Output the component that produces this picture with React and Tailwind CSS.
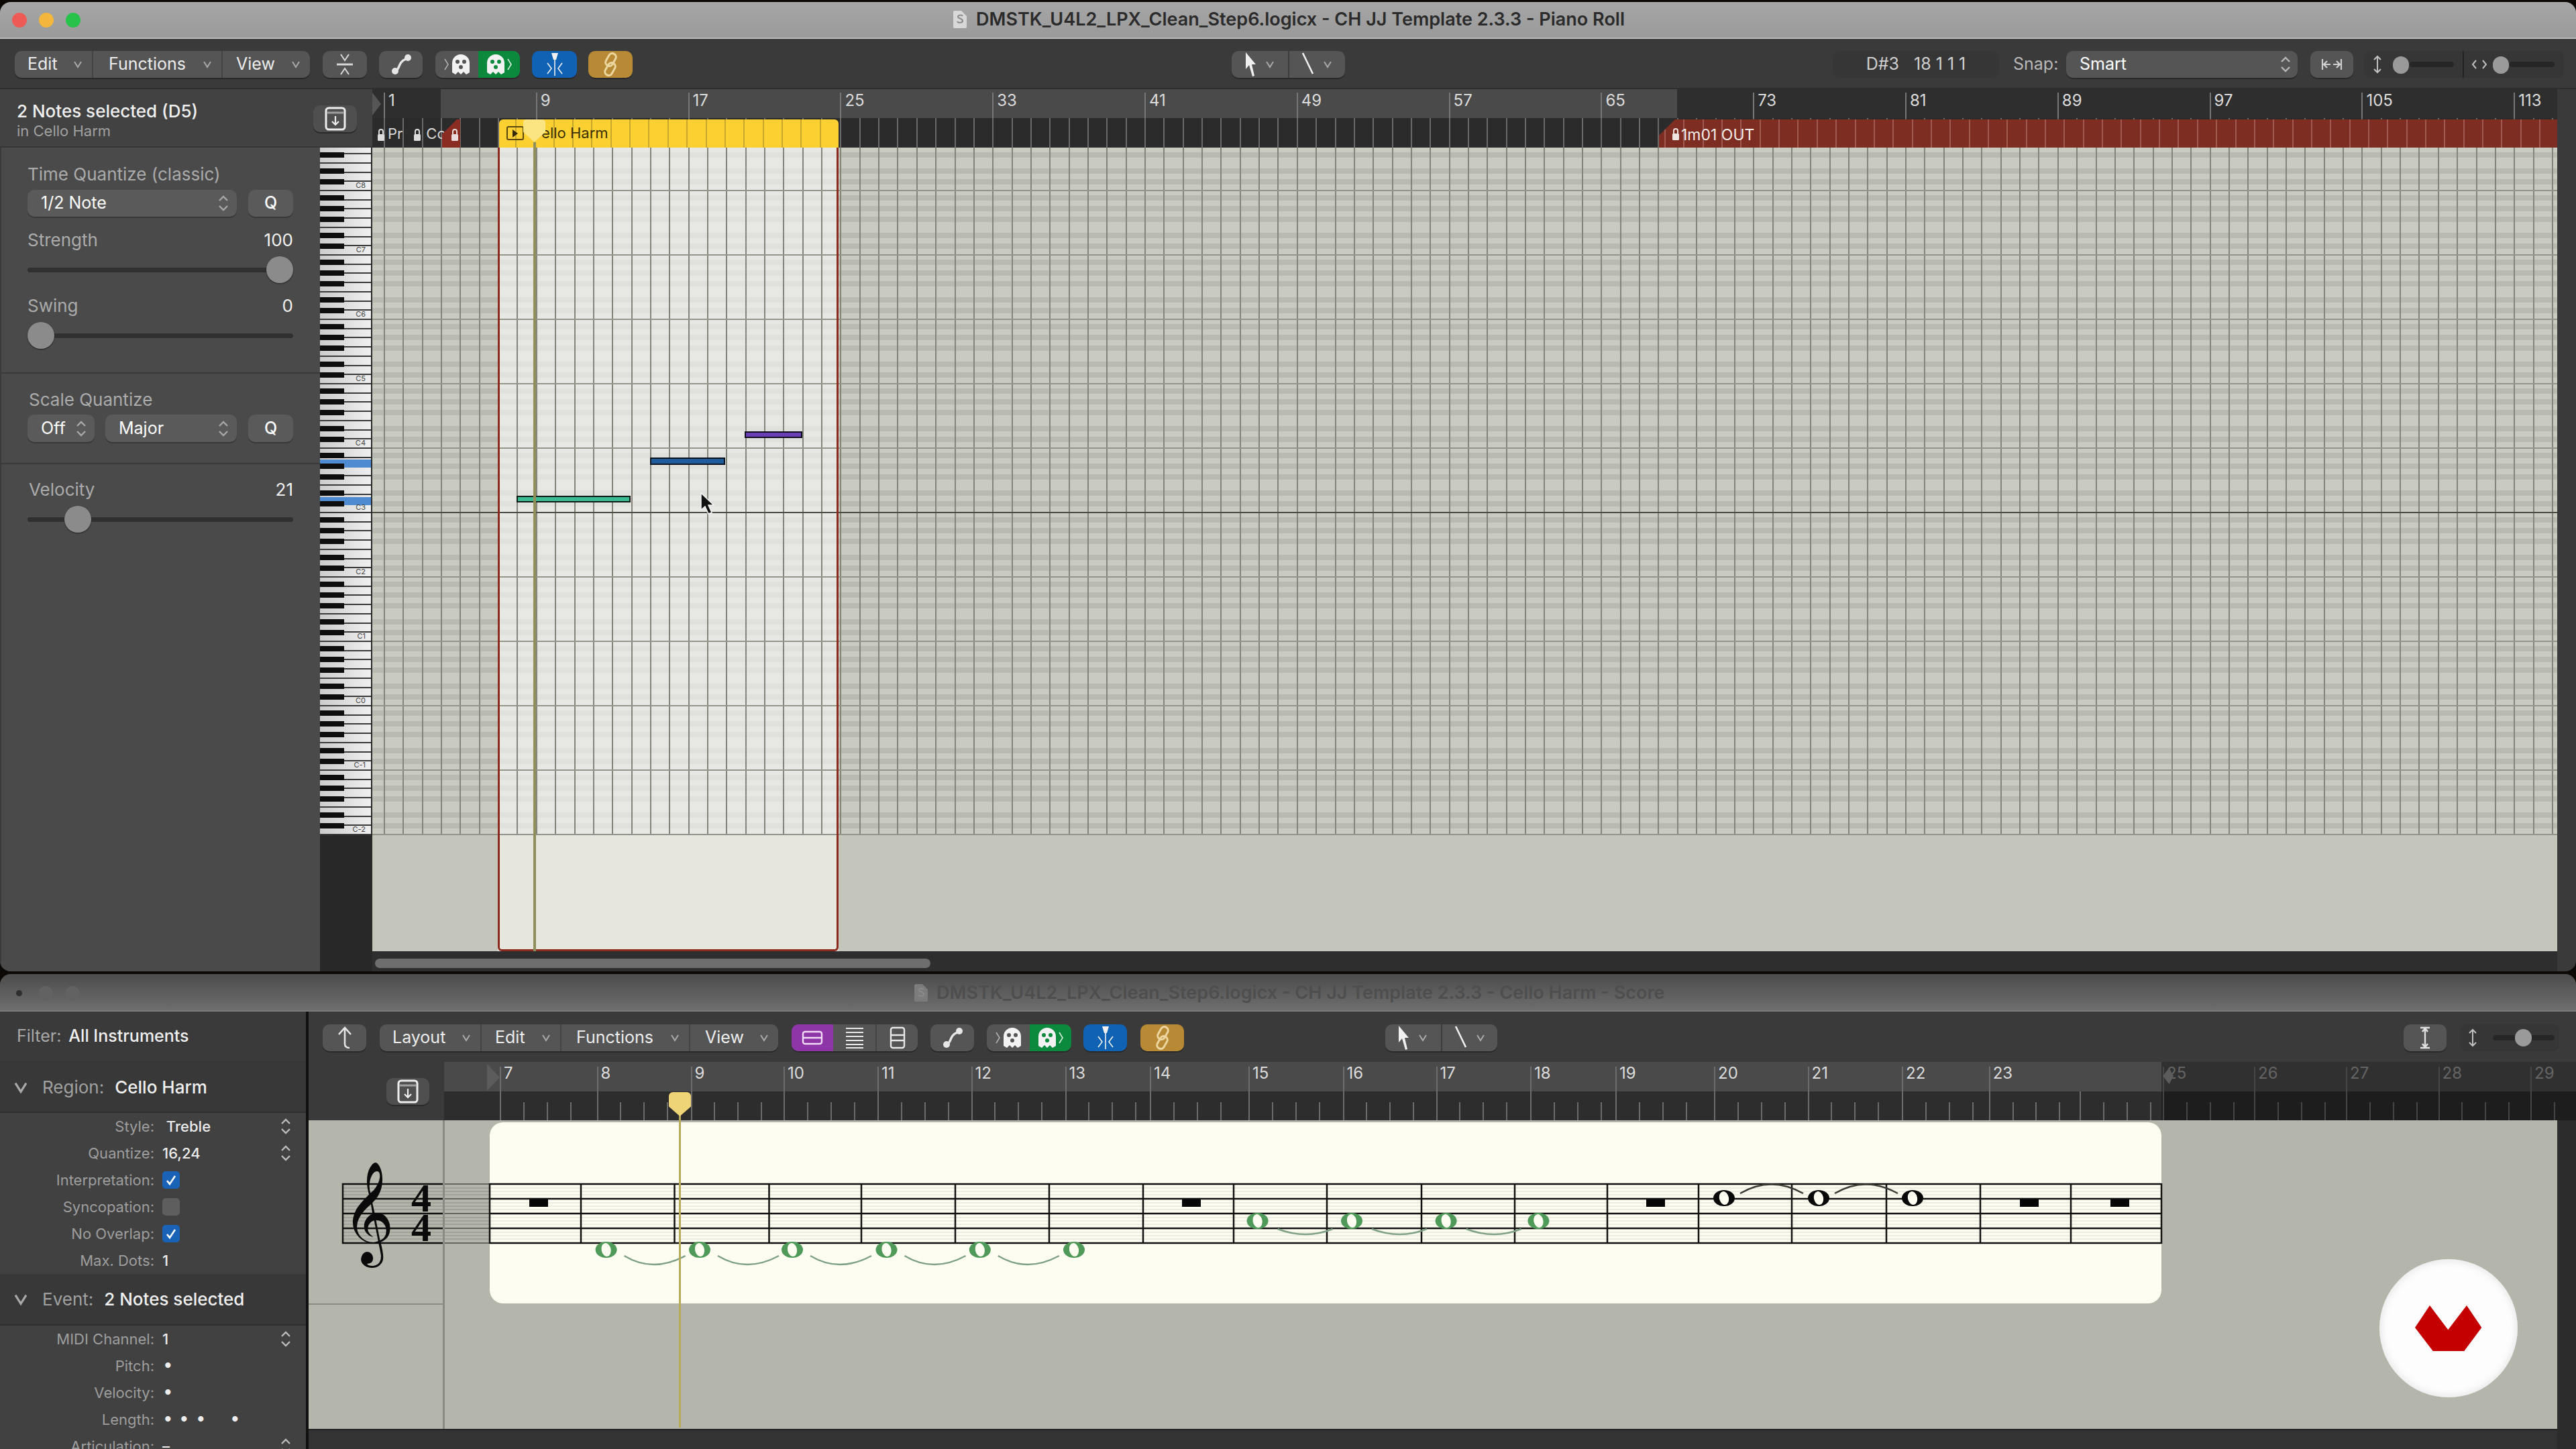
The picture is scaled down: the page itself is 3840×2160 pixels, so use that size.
import React from 'react';

// shared button looks
const btnBase = 'flex items-center justify-center h-[40px] rounded-[10px] shadow-[0_2px_0_#2a2a2a]';
const btn = `${btnBase} bg-[#555555]`;
const BAR = 28.35;
const range = (n) => Array.from({ length: n }, (_, i) => i);

const Chev = ({ className = '' }) => (
  <svg className={className} width="14" height="12" viewBox="0 0 14 12" fill="none" stroke="#a8a8a8" strokeWidth="2"><path d="M2 2l5 8 5-8" /></svg>
);

const Updown = ({ color = '#b8b8b8', className = '' }) => (
  <svg className={className} width="16" height="26" viewBox="0 0 16 26" fill="none" stroke={color} strokeWidth="2.4"><path d="M2 9l6-6 6 6M2 17l6 6 6-6" /></svg>
);

const Lock = ({ className = '', color = '#dddddd' }) => (
  <svg className={className} width="12" height="20" viewBox="0 0 12 20" fill="none"><path d="M3 9V5a3 3 0 0 1 6 0v4" stroke={color} strokeWidth="2" /><rect x="1" y="9" width="10" height="10" rx="1.5" fill={color} /></svg>
);

const Collapse = () => (
  <svg width="26" height="32" viewBox="0 0 26 32" fill="none" stroke="#d8d8d8" strokeWidth="2"><path d="M7 1l6 9 6-9M7 31l6-9 6 9" /><path d="M1 16h24" strokeWidth="3" /></svg>
);

const Wire = () => (
  <svg width="34" height="34" viewBox="0 0 34 34" fill="none"><path d="M8 27c6-2 5-8 9-13s6-4 9-6" stroke="#e6e6e6" strokeWidth="3.5" /><circle cx="8" cy="27" r="5" fill="#e6e6e6" /><circle cx="27" cy="7" r="5" fill="#e6e6e6" /></svg>
);

const Ghost = ({ hole }) => (
  <svg width="28" height="32" viewBox="0 0 28 32"><path d="M1 28V14a13 13 0 0 1 26 0v14l-5 3-4-4-4 4-4-4-4 4z" fill="#f2f2f2" /><circle cx="9" cy="12" r="3" fill={hole} /><circle cx="19" cy="12" r="3" fill={hole} /><circle cx="14" cy="20" r="3" fill={hole} /></svg>
);

const Catch = () => (
  <div className="flex h-[40px] w-[126px] rounded-[10px] bg-[#555555] shadow-[0_2px_0_#2a2a2a] overflow-hidden">
    <div className="flex w-[64px] items-center justify-center gap-[3px]">
      <svg width="8" height="20" viewBox="0 0 8 20" fill="none" stroke="#b0b0b0" strokeWidth="1.6"><path d="M1 2l5 8-5 8" /></svg>
      <Ghost hole="#555555" />
    </div>
    <div className="flex flex-1 items-center justify-center gap-[3px] bg-[#0b8a3e]">
      <Ghost hole="#0b8a3e" />
      <svg width="8" height="20" viewBox="0 0 8 20" fill="none" stroke="#d5efdd" strokeWidth="1.6"><path d="M1 2l5 8-5 8" /></svg>
    </div>
  </div>
);

const Flex = () => (
  <svg width="30" height="36" viewBox="0 0 30 36" fill="none" stroke="#f0f0f0" strokeWidth="1.6">
    <path d="M10 1h10l-3 10h-4z" fill="#f0f0f0" stroke="none" />
    <path d="M15 10v25" />
    <path d="M4 16l6 8-6 8M26 16l-6 8 6 8" />
  </svg>
);

const LinkIcon = () => (
  <svg width="30" height="36" viewBox="0 0 30 36" fill="none" stroke="#ecd6a0" strokeWidth="3">
    <rect x="10" y="1" width="11" height="20" rx="5.5" transform="rotate(30 15.5 11)" />
    <rect x="9" y="15" width="11" height="20" rx="5.5" transform="rotate(30 14.5 25)" />
  </svg>
);

const Arrow = () => (
  <svg width="18" height="38" viewBox="0 0 18 38"><path d="M1 1l15 18h-6l4 17-3 1-5-17-5 6z" fill="#f0f0f0" /></svg>
);

const Pencil = () => (
  <svg width="20" height="38" viewBox="0 0 20 38" fill="none" stroke="#f0f0f0" strokeWidth="2.6"><path d="M2 2l15 31" /></svg>
);

const Tools = ({ className }) => (
  <div className={`flex h-[40px] rounded-[10px] bg-[#555555] shadow-[0_2px_0_#2a2a2a] ${className}`}>
    <div className="flex flex-1 items-center justify-center gap-[12px] border-r-2 border-[#3d3d3d]"><Arrow /><Chev /></div>
    <div className="flex flex-1 items-center justify-center gap-[12px]"><Pencil /><Chev /></div>
  </div>
);

const Inbox = () => (
  <svg width="32" height="36" viewBox="0 0 32 36" fill="none" stroke="#eeeeee"><rect x="2" y="2" width="28" height="32" rx="4" strokeWidth="3" /><path d="M3 9h26" strokeWidth="3" stroke="#a0a0a0" /><path d="M16 14v13M11 22l5 5 5-5" strokeWidth="2.2" /></svg>
);

const DocIcon = ({ className, color }) => (
  <svg className={className} width="22" height="28" viewBox="0 0 22 28"><path d="M1 3a2 2 0 0 1 2-2h10l8 8v16a2 2 0 0 1-2 2H3a2 2 0 0 1-2-2z" fill={color} /><path d="M15 9c-1-2-7-2-7 1s7 2 7 6-7 3-8 1" fill="none" stroke="#8a8a8a" strokeWidth="2" /></svg>
);

const Seg = ({ label, w, pl }) => (
  <div className="flex h-full items-center justify-between border-r-2 border-[#444444] last:border-r-0 pr-[14px] text-[25px] text-[#ececec]" style={{ width: w, paddingLeft: pl }}>
    <span>{label}</span><Chev />
  </div>
);

const Slider = ({ knob }) => (
  <div className="relative h-[40px]">
    <div className="absolute left-0 right-0 top-[17px] h-[7px] rounded-full bg-[#303030]" />
    <div className="absolute top-0 h-[40px] w-[40px] rounded-full bg-[#8b8b8b] shadow-[0_1px_2px_#222222]" style={{ left: knob }} />
  </div>
);

const Select = ({ label, className }) => (
  <div className={`flex items-center justify-between rounded-[10px] bg-[#5a5a5a] shadow-[0_2px_0_#383838] pl-[20px] pr-[12px] text-[25px] text-white ${className}`}>
    <span>{label}</span><Updown color="#a8a8a8" />
  </div>
);

const QBtn = () => (
  <div className="flex w-[67px] items-center justify-center rounded-[10px] bg-[#5a5a5a] shadow-[0_2px_0_#383838] text-[25px] font-medium text-white">Q</div>
);

// keyboard on the left of the piano roll, one octave is 96px
function Piano() {
  const blacks = [1, 3, 6, 8, 10];
  return (
    <div className="relative h-[1025px] w-[76px] overflow-hidden bg-gradient-to-r from-[#cccccc] to-[#f0f0f0]">
      {range(11).map((o) =>
        range(7).map((j) => (
          <div key={`w${o}${j}`} className="absolute left-0 right-0 h-[2px] bg-[#3a3a3a]" style={{ top: 1023 - o * 96 - (j * 96) / 7 }} />
        ))
      )}
      <div className="absolute left-0 right-0 top-[465px] h-[12px] bg-[#4f8bd0]" />
      <div className="absolute left-0 right-0 top-[521px] h-[12px] bg-[#4f8bd0]" />
      {range(128).filter((i) => blacks.includes(i % 12)).map((i) => (
        <div key={i} className="absolute left-0 h-[8px] w-[36px] bg-[#0e0e0e]" style={{ top: 1023 - 8 * (i + 1) }} />
      ))}
      {range(11).map((o) => (
        <span key={o} className="absolute right-[8px] text-[11px] leading-[12px] text-[#444444]" style={{ top: 1023 - o * 96 - 13 }}>{`C${o - 2}`}</span>
      ))}
    </div>
  );
}

function PianoRollGrid() {
  const blacks = [1, 3, 6, 8, 10];
  return (
    <div className="relative h-[1025px] overflow-hidden bg-[#c9cac0]">
      {range(128).filter((i) => blacks.includes(i % 12)).map((i) => (
        <div key={i} className="absolute left-0 right-0 h-[8px] bg-black/[0.08]" style={{ top: 1023 - 8 * (i + 1) }} />
      ))}
      <div className="absolute left-[187px] top-0 h-full w-[508px] bg-white/55" />
      {range(115).map((k) => (
        <div key={k} className="absolute top-0 h-full w-[2px] bg-[#83847a]" style={{ left: 17 + BAR * k }} />
      ))}
      {range(11).map((o) => (
        <div key={o} className={`absolute left-0 right-0 h-[2px] ${o === 5 ? 'bg-[#4c4d45]' : 'bg-[#94958b]'}`} style={{ top: 1023 - o * 96 }} />
      ))}
      {/* notes */}
      <div className="absolute left-[215px] top-[519px] h-[10px] w-[170px] border-2 border-[#0c1a16] bg-[#3cba94]" />
      <div className="absolute left-[414px] top-[462px] h-[11px] w-[112px] border-2 border-[#0a1420] bg-[#1f5c9c]" />
      <div className="absolute left-[555px] top-[423px] h-[10px] w-[86px] border-2 border-[#120a20] bg-[#6a3fb4]" />
    </div>
  );
}

function PianoRollRuler() {
  return (
    <div className="relative h-[43px] bg-[#2e2e2e]">
      <div className="absolute left-[102px] top-0 h-full w-[1843px] bg-[#4a4a4a]" />
      <div className="absolute left-0 top-[5px] h-0 w-0 border-y-[17px] border-l-[13px] border-y-transparent border-l-[#565656]" />
      {range(15).map((k) => (
        <React.Fragment key={k}>
          <div className="absolute top-[5px] h-[38px] w-[2px] bg-[#777777]" style={{ left: 17 + 226.8 * k }} />
          <span className="absolute top-[1px] text-[24px] leading-[32px] text-[#dcdcdc]" style={{ left: 24 + 226.8 * k }}>{8 * k + 1}</span>
        </React.Fragment>
      ))}
    </div>
  );
}

function PianoRollStrip() {
  return (
    <div className="relative h-[44px] bg-[#2b2b2b]">
      {range(115).map((k) => (
        <div key={k} className="absolute top-0 h-full w-[2px] bg-[#6a6a6a]" style={{ left: 17 + BAR * k }} />
      ))}
      <div className="absolute left-0 top-[3px] bottom-0 w-[100px] flex items-center text-[22px] text-[#d8d8d8]">
        <span className="ml-[23px]">Pr</span>
        <span className="ml-[35px]">Cc</span>
      </div>
      <Lock className="absolute left-[7px] top-[15px]" />
      <Lock className="absolute left-[61px] top-[15px]" />
      <div className="absolute left-[104px] top-[2px] bottom-0 w-[27px] bg-[#8a2c22] [clip-path:polygon(22px_0,100%_0,100%_100%,0_100%,0_22px)]">
        <Lock className="absolute left-[13px] top-[13px]" color="#e8dcdc" />
      </div>
      {/* yellow region */}
      <div className="absolute left-[189px] top-[2px] bottom-0 w-[506px] rounded-t-[6px] bg-[#fcd030] overflow-hidden">
        {range(18).map((k) => (
          <div key={k} className="absolute top-0 h-full w-[2px] bg-[#c9a62e]" style={{ left: 14 + BAR * k + 10 }} />
        ))}
        <div className="absolute left-[11px] top-[10px] flex h-[21px] w-[26px] items-center justify-center rounded-[3px] border-2 border-[#5a4710]">
          <div className="h-0 w-0 border-y-[6px] border-l-[8px] border-y-transparent border-l-[#332800]" />
        </div>
        <span className="absolute left-[47px] top-[4px] text-[22px] leading-[32px] text-[#3a3000]">Cello Harm</span>
      </div>
      {/* red region */}
      <div className="absolute left-[1918px] right-0 top-[2px] bottom-0 bg-[#7e2d22] [clip-path:polygon(24px_0,100%_0,100%_100%,0_100%,0_24px)]">
        {range(48).map((k) => (
          <div key={k} className="absolute top-0 h-full w-[2px] bg-[#a05a50]" style={{ left: 8 + BAR * k }} />
        ))}
        <Lock className="absolute left-[19px] top-[12px]" color="#f0e4e0" />
        <span className="absolute left-[33px] top-[7px] text-[23px] leading-[32px] text-[#f4ece8]">1m01 OUT</span>
      </div>
    </div>
  );
}

function PianoRollWindow() {
  return (
    <div className="flex h-[1445px] shrink-0 flex-col overflow-hidden rounded-[16px] bg-[#3a3a3a]">
      <div className="relative h-[55px] shrink-0 border-b-2 border-[#bbbbbb] bg-gradient-to-b from-[#a6a6a6] to-[#9a9a9a]">
        <div className="absolute left-[18px] top-[16px] h-[22px] w-[22px] rounded-full bg-[#ee5a56]" />
        <div className="absolute left-[58px] top-[16px] h-[22px] w-[22px] rounded-full bg-[#f4b63c]" />
        <div className="absolute left-[98px] top-[16px] h-[22px] w-[22px] rounded-full bg-[#27c24a]" />
        <DocIcon className="absolute left-[1420px] top-[12px]" color="#d8d8d8" />
        <span className="absolute left-[1455px] top-[8px] whitespace-nowrap text-[27px] font-semibold leading-[36px] text-[#2b2b2b]">DMSTK_U4L2_LPX_Clean_Step6.logicx - CH JJ Template 2.3.3 - Piano Roll</span>
      </div>

      <div className="flex h-[75px] shrink-0 items-center border-b-2 border-[#2e2e2e] pl-[22px] pt-[3px]">
        <div className="flex h-[40px] w-[440px] rounded-[10px] bg-[#555555] shadow-[0_2px_0_#2a2a2a]">
          <Seg label="Edit" w={117} pl={19} />
          <Seg label="Functions" w={193} pl={23} />
          <Seg label="View" w={130} pl={20} />
        </div>
        <div className={`${btn} ml-[19px] w-[66px]`}><Collapse /></div>
        <div className={`${btn} ml-[18px] w-[65px]`}><Wire /></div>
        <div className="ml-[19px]"><Catch /></div>
        <div className={`${btnBase} ml-[18px] w-[67px] bg-[#0f62b4]`}><Flex /></div>
        <div className={`${btnBase} ml-[17px] w-[66px] bg-[#b88a35]`}><LinkIcon /></div>
        <Tools className="ml-[893px] w-[169px]" />
        <div className="ml-[727px] flex h-[40px] w-[248px] items-center justify-center rounded-[10px] bg-[#363636] text-[25px] text-[#d0d0d0]">
          <span>D#3</span><span className="ml-[22px]">18 1 1 1</span>
        </div>
        <span className="ml-[21px] w-[68px] text-[25px] text-[#b8b8b8]">Snap:</span>
        <div className="ml-[11px] flex h-[40px] w-[345px] items-center justify-between rounded-[10px] bg-[#555555] shadow-[0_2px_0_#2a2a2a] pl-[20px] pr-[10px] text-[25px] text-white">
          <span>Smart</span><Updown />
        </div>
        <div className={`${btn} ml-[19px] w-[64px]`}>
          <svg width="32" height="20" viewBox="0 0 32 20" fill="none" stroke="#d0d0d0" strokeWidth="2.2"><path d="M2 2v16M30 2v16M4 10h10M18 10h10M9 5l-5 5 5 5M23 5l5 5-5 5" /></svg>
        </div>
        <div className="relative ml-[16px] h-[40px] w-[298px] rounded-[10px] bg-[#363636]">
          <svg className="absolute left-[13px] top-[6px]" width="14" height="28" viewBox="0 0 14 28" fill="none" stroke="#c0c0c0" strokeWidth="2"><path d="M2 7l5-5 5 5M7 2v24M2 21l5 5 5-5" /></svg>
          <div className="absolute left-[68px] top-[16px] h-[8px] w-[66px] rounded-full bg-[#262626]" />
          <div className="absolute left-[43px] top-[8px] h-[26px] w-[24px] rounded-full bg-[#9a9a9a]" />
          <div className="absolute left-[147px] top-0 h-full w-[2px] bg-[#222222]" />
          <svg className="absolute left-[160px] top-[12px]" width="24" height="16" viewBox="0 0 24 16" fill="none" stroke="#c0c0c0" strokeWidth="2"><path d="M7 2L2 8l5 6M17 2l5 6-5 6" /></svg>
          <div className="absolute left-[217px] top-[16px] h-[8px] w-[67px] rounded-full bg-[#262626]" />
          <div className="absolute left-[192px] top-[8px] h-[26px] w-[24px] rounded-full bg-[#9a9a9a]" />
        </div>
      </div>

      <div className="flex flex-1">
        <div className="flex w-[555px] flex-col">
          <div className="relative h-[87px] border-b-2 border-[#363636] bg-[#424242]">
            <div className="absolute left-[25px] top-[15px] text-[26px] font-medium leading-[36px] text-[#f0f0f0]">2 Notes selected (D5)</div>
            <div className="absolute left-[25px] top-[47px] text-[22px] leading-[30px] text-[#a0a0a0]">in Cello Harm</div>
            <div className={`${btnBase} absolute left-[467px] top-[24px] w-[65px] bg-[#4f4f4f]`}><Inbox /></div>
          </div>
          <div className="flex flex-1">
            <div className="w-[477px] bg-[#4a4a4a] border-l-2 border-[#3a3a3a]">
              <div className="w-[396px] ml-[39px]">
                <div className="mt-[21px] flex h-[36px] items-center text-[26px] text-[#ababab]">Time Quantize (classic)</div>
                <div className="mt-[6px] flex h-[40px] justify-between">
                  <Select label="1/2 Note" className="w-[312px]" />
                  <QBtn />
                </div>
                <div className="mt-[19px] flex h-[30px] items-center justify-between text-[26px] text-[#ababab]"><span>Strength</span><span className="text-[#f0f0f0]">100</span></div>
                <div className="mt-[10px]"><Slider knob={356} /></div>
                <div className="mt-[18px] flex h-[30px] items-center justify-between text-[26px] text-[#ababab]"><span>Swing</span><span className="text-[#f0f0f0]">0</span></div>
                <div className="mt-[10px]"><Slider knob={0} /></div>
              </div>
              <div className="mt-[35px] h-[2px] bg-[#3a3a3a]" />
              <div className="w-[396px] ml-[39px]">
                <div className="mt-[20px] flex h-[36px] items-center pl-[2px] text-[26px] text-[#ababab]">Scale Quantize</div>
                <div className="mt-[5px] flex h-[41px] justify-between">
                  <Select label="Off" className="w-[100px]" />
                  <Select label="Major" className="ml-[16px] w-[196px]" />
                  <div className="flex-1" />
                  <QBtn />
                </div>
              </div>
              <div className="mt-[31px] h-[2px] bg-[#3a3a3a]" />
              <div className="w-[396px] ml-[39px]">
                <div className="mt-[22px] flex h-[30px] items-center justify-between pl-[2px] text-[26px] text-[#ababab]"><span>Velocity</span><span className="text-[#f0f0f0]">21</span></div>
                <div className="mt-[10px]"><Slider knob={55} /></div>
              </div>
            </div>
            <div className="flex w-[78px] flex-col bg-[#282828]">
              <Piano />
            </div>
          </div>
        </div>

        <div className="relative flex flex-1 flex-col">
          <div className="w-[3257px]">
            <PianoRollRuler />
            <PianoRollStrip />
            <PianoRollGrid />
            <div className="relative h-[173px] bg-[#c4c5bb]">
              <div className="absolute left-[187px] top-0 h-full w-[508px] bg-[#e6e6de]" />
            </div>
            <div className="relative h-[30px] bg-[#2e2e2e]">
              <div className="absolute left-[4px] top-[11px] h-[14px] w-[828px] rounded-full bg-[#6e6e6e]" />
            </div>
          </div>
          {/* selection frame and playhead sit over ruler strip and grid */}
          <div className="absolute left-[187px] top-[87px] h-[1198px] w-[508px] rounded-b-[6px] border-x-[3px] border-b-[3px] border-[#8c2a20]" />
          <div className="absolute left-[240px] top-[79px] h-[1206px] w-[4px] bg-[#8f8f5c]" />
          <div className="absolute left-[225px] top-[45px] h-[34px] w-[33px] rounded-t-[5px] bg-[#fbe583] [clip-path:polygon(0_0,100%_0,100%_55%,50%_100%,0_55%)]" />
          <svg className="absolute left-[488px] top-[601px]" width="22" height="34" viewBox="0 0 22 34"><path d="M2 1v25l6-5 5 11 5-2-5-11h8z" fill="#111111" stroke="#f4f4f4" strokeWidth="1.5" /></svg>
        </div>
      </div>
    </div>
  );
}

const barX = { 7: 745, 8: 889.5, 9: 1029.6, 10: 1168, 11: 1308, 12: 1447.5, 13: 1587.6, 14: 1714, 15: 1861, 16: 2001.5, 17: 2140.6, 18: 2281, 19: 2408, 20: 2555, 21: 2694.5, 22: 2835, 23: 2964.7, 24: 3100, 25: 3224, 26: 3360, 27: 3497, 28: 3634.5, 29: 3772 };
const staffBars = [730, 866, 1005.5, 1146.5, 1284, 1424, 1564, 1704, 1839, 1978, 2119, 2258, 2396, 2532, 2671, 2812, 2952, 3087, 3222];
const staffY = [1765, 1787, 1809, 1831, 1853];
const rests = [803, 1776, 2468, 3025, 3160];

const WholeNote = ({ x, y, color }) => (
  <g>
    <ellipse cx={x} cy={y} rx="16" ry="12" fill={color} />
    <ellipse cx={x} cy={y} rx="7" ry="10" fill="#fdfdf1" transform={`rotate(-12 ${x} ${y})`} />
  </g>
);

function ScoreArea() {
  const greenLow = [903.6, 1043, 1181, 1321.5, 1460.8, 1601];
  const greenHigh = [1874.6, 2015, 2155.6, 2293.4];
  const blackNotes = [2570, 2711, 2851];
  return (
    <svg className="absolute left-0 top-[162px]" width="3380" height="460" viewBox="460 1670 3380 460">
      <rect x="730" y="1673" width="2492" height="270" rx="20" fill="#fdfdf1" />
      {staffY.slice(0, 4).map((y) =>
        [6, 11, 16].map((d) => <line key={`${y}${d}`} x1="730" x2="3222" y1={y + d} y2={y + d} stroke="#dcdcd0" strokeWidth="1" />)
      )}
      {[510, 662].map((x0) => staffY.slice(0, 4).map((y) => (
        [6, 11, 16].map((d) => <line key={`${x0}${y}${d}`} x1={x0} x2={x0 === 510 ? 662 : 730} y1={y + d} y2={y + d} stroke="#8c8d84" strokeWidth="1" />)
      )))}
      {staffY.map((y) => (
        <g key={y}>
          <line x1="510" x2="662" y1={y} y2={y} stroke="#111111" strokeWidth="2.5" />
          <line x1="662" x2="730" y1={y} y2={y} stroke="#66675f" strokeWidth="2" />
          <line x1="730" x2="3222" y1={y} y2={y} stroke="#111111" strokeWidth="2.5" />
        </g>
      ))}
      <line x1="511" x2="511" y1="1764" y2="1854" stroke="#111111" strokeWidth="2.5" />
      {staffBars.map((x) => <line key={x} x1={x} x2={x} y1="1764" y2="1854" stroke="#111111" strokeWidth="2.5" />)}
      <text x="510" y="1852" fontFamily="DejaVu Sans" fontSize="132" fill="#0a0a0a">𝄞</text>
      <text x="613" y="1806" fontFamily="Liberation Serif" fontWeight="bold" fontSize="60" fill="#0a0a0a">4</text>
      <text x="613" y="1850" fontFamily="Liberation Serif" fontWeight="bold" fontSize="60" fill="#0a0a0a">4</text>
      {rests.map((x) => <rect key={x} x={x - 14} y="1788" width="28" height="11" fill="#050505" />)}
      {greenLow.map((x) => <WholeNote key={x} x={x} y={1863} color="#4f9a58" />)}
      {greenLow.slice(0, 5).map((x) => (
        <path key={x} d={`M${x + 27} 1872 Q${x + 70} 1898 ${x + 118} 1872`} fill="none" stroke="#7fa287" strokeWidth="2.5" />
      ))}
      {greenHigh.map((x) => <WholeNote key={x} x={x} y={1820} color="#4f9a58" />)}
      {greenHigh.slice(0, 3).map((x) => (
        <path key={x} d={`M${x + 30} 1832 Q${x + 72} 1848 ${x + 112} 1832`} fill="none" stroke="#7fa287" strokeWidth="2.5" />
      ))}
      {blackNotes.map((x) => <WholeNote key={x} x={x} y={1786} color="#080808" />)}
      {blackNotes.slice(0, 2).map((x) => (
        <path key={x} d={`M${x + 24} 1779 Q${x + 70} 1752 ${x + 118} 1779`} fill="none" stroke="#3b3b36" strokeWidth="2.5" />
      ))}
    </svg>
  );
}

const Row = ({ label, value, stepper, check, dots }) => (
  <div className="relative flex h-[40px] shrink-0 items-center text-[22px]">
    <span className="w-[230px] text-right text-[#9e9e9e]">{label}</span>
    {check !== undefined ? (
      <span className={`ml-[12px] flex h-[26px] w-[26px] items-center justify-center rounded-[5px] ${check ? 'bg-[#1a62b6]' : 'bg-[#5e5e5e]'}`}>
        {check && <svg width="20" height="20" viewBox="0 0 20 20" fill="none" stroke="#ffffff" strokeWidth="2.6"><path d="M4 11l4 5 8-12" /></svg>}
      </span>
    ) : (
      <span className="ml-[12px] whitespace-pre font-medium text-[#ececec]">{value}</span>
    )}
    {dots && dots.map((x) => (
      <span key={x} className="absolute top-[3px] text-[26px] leading-[30px] text-[#ececec]" style={{ left: x }}>•</span>
    ))}
    {stepper && <Updown className="absolute left-[418px] top-[7px]" color="#bdbdbd" />}
  </div>
);

function Inspector2() {
  return (
    <div className="flex h-[652px] w-[460px] flex-col overflow-hidden border-r-4 border-[#111111] bg-[#414141]">
      <div className="flex h-[76px] shrink-0 items-center border-b-2 border-[#363636] bg-[#3a3a3a] pl-[25px] text-[25px]">
        <span className="text-[#a8a8a8]">Filter:</span><span className="ml-[11px] font-medium text-[#f0f0f0]">All Instruments</span>
      </div>
      <div className="flex h-[75px] shrink-0 items-center border-b-2 border-[#2e2e2e] bg-[#383838] text-[26px]">
        <Chev className="ml-[24px] scale-[1.6]" />
        <span className="ml-[25px] text-[#a0a0a0]">Region:</span><span className="ml-[16px] font-medium text-[#f0f0f0]">Cello Harm</span>
      </div>
      <Row label="Style:" value=" Treble" stepper />
      <Row label="Quantize:" value="16,24" stepper />
      <Row label="Interpretation:" check />
      <Row label="Syncopation:" check={false} />
      <Row label="No Overlap:" check />
      <Row label="Max. Dots:" value="1" />
      <div className="flex h-[77px] shrink-0 items-center border-b-2 border-[#2e2e2e] bg-[#383838] text-[26px]">
        <Chev className="ml-[24px] scale-[1.6]" />
        <span className="ml-[25px] text-[#a0a0a0]">Event:</span><span className="ml-[16px] font-medium text-[#f0f0f0]">2 Notes selected</span>
      </div>
      <Row label="MIDI Channel:" value="1" stepper />
      <Row label="Pitch:" dots={[243]} />
      <Row label="Velocity:" dots={[243]} />
      <Row label="Length:" dots={[243, 267, 292, 343]} />
      <Row label="Articulation:" value="–" stepper />
    </div>
  );
}

function ScoreWindow() {
  return (
    <div className="flex h-[708px] shrink-0 flex-col overflow-hidden rounded-t-[16px] bg-[#3a3a3a]">
      <div className="relative h-[56px] shrink-0 border-b-2 border-[#7a7a7a] bg-gradient-to-b from-[#4c4c4c] to-[#6e6e6e]">
        <div className="absolute left-[24px] top-[24px] h-[9px] w-[9px] rounded-full bg-[#2e2e2e]" />
        <div className="absolute left-[57px] top-[18px] h-[22px] w-[22px] rounded-full bg-[#626262]" />
        <div className="absolute left-[97px] top-[18px] h-[22px] w-[22px] rounded-full bg-[#626262]" />
        <DocIcon className="absolute left-[1362px] top-[14px]" color="#7c7c7c" />
        <span className="absolute left-[1396px] top-[10px] whitespace-nowrap text-[27px] font-semibold leading-[36px] text-[#4e4e4e]">DMSTK_U4L2_LPX_Clean_Step6.logicx - CH JJ Template 2.3.3 - Cello Harm - Score</span>
      </div>
      <div className="flex h-[652px]">
        <Inspector2 />
        <div className="relative w-[3380px]">
          <div className="flex h-[75px] items-center pl-[21px] pt-[3px]">
            <div className={`${btn} w-[65px]`}>
              <svg width="28" height="36" viewBox="0 0 28 36" fill="none" stroke="#e4e4e4" strokeWidth="2.6"><path d="M5 13l9-10 9 10M14 3v24q0 6 7 6" /></svg>
            </div>
            <div className="ml-[20px] flex h-[40px] w-[594px] rounded-[10px] bg-[#555555] shadow-[0_2px_0_#2a2a2a]">
              <Seg label="Layout" w={152} pl={19} />
              <Seg label="Edit" w={119} pl={20} />
              <Seg label="Functions" w={192} pl={22} />
              <Seg label="View" w={131} pl={22} />
            </div>
            <div className="ml-[20px] flex h-[40px] w-[188px] overflow-hidden rounded-[10px] bg-[#555555] shadow-[0_2px_0_#2a2a2a]">
              <div className="flex w-[62px] items-center justify-center bg-[#8e35a8]">
                <svg width="32" height="22" viewBox="0 0 32 22" fill="none" stroke="#f0dcf4" strokeWidth="2.4"><rect x="2" y="2" width="28" height="18" rx="3" /><path d="M3 11h26" /></svg>
              </div>
              <div className="flex w-[65px] items-center justify-center border-r-2 border-[#444444]">
                <svg width="30" height="34" viewBox="0 0 30 34" fill="none" stroke="#e8e8e8" strokeWidth="2"><path d="M2 3h26M2 9h26M2 15h26M2 21h26M2 27h26M2 32h26" /></svg>
              </div>
              <div className="flex flex-1 items-center justify-center">
                <svg width="24" height="34" viewBox="0 0 24 34" fill="none" stroke="#e8e8e8" strokeWidth="2.4"><rect x="2" y="2" width="20" height="30" rx="3" /><path d="M3 13h18M3 21h18" /></svg>
              </div>
            </div>
            <div className={`${btn} ml-[19px] w-[65px]`}><Wire /></div>
            <div className="ml-[19px]"><Catch /></div>
            <div className={`${btnBase} ml-[18px] w-[65px] bg-[#0f62b4]`}><Flex /></div>
            <div className={`${btnBase} ml-[20px] w-[65px] bg-[#b88a35]`}><LinkIcon /></div>
            <Tools className="ml-[300px] w-[167px]" />
            <div className={`${btn} ml-[1351px] w-[64px]`}>
              <svg width="20" height="36" viewBox="0 0 20 36" fill="none" stroke="#e0e0e0" strokeWidth="2.4"><path d="M3 3h14M3 33h14M10 3v30M6 9l4-5 4 5M6 27l4 5 4-5" /></svg>
            </div>
            <div className="relative ml-[20px] h-[40px] w-[148px] rounded-[10px] bg-[#363636]">
              <svg className="absolute left-[12px] top-[6px]" width="14" height="28" viewBox="0 0 14 28" fill="none" stroke="#c0c0c0" strokeWidth="2"><path d="M2 7l5-5 5 5M7 2v24M2 21l5 5 5-5" /></svg>
              <div className="absolute left-[49px] top-[16px] h-[8px] w-[92px] rounded-full bg-[#262626]" />
              <div className="absolute left-[82px] top-[7px] h-[26px] w-[25px] rounded-full bg-[#9a9a9a]" />
            </div>
          </div>

          {/* left column beside the ruler */}
          <div className="absolute left-0 top-[75px] h-[87px] w-[202px] bg-[#3a3a3a]">
            <div className={`${btnBase} absolute left-[116px] top-[24px] w-[64px] bg-[#4f4f4f]`}><Inbox /></div>
          </div>
          <div className="absolute left-[202px] top-[75px] h-[44px] w-[3178px] bg-[#4a4a4a]" />
          <div className="absolute left-[202px] top-[119px] h-[43px] w-[3178px] bg-[#2d2d2d]" />
          <div className="absolute left-[266px] top-[78px] h-0 w-0 border-y-[20px] border-l-[19px] border-y-transparent border-l-[#5c5c5c]" />

          {Object.entries(barX).map(([n, x]) => (
            <React.Fragment key={n}>
              <div className={`absolute w-[2px] bg-[#6c6c6c] ${n === '24' ? 'top-[119px] h-[43px]' : 'top-[82px] h-[80px]'}`} style={{ left: x - 460 }} />
              {range(3).map((q) => (
                <div key={q} className="absolute top-[135px] h-[27px] w-[2px] bg-[#6a6a6a]" style={{ left: x - 460 + ((q + 1) * 139.5) / 4 }} />
              ))}
              {n !== '24' && (
                <span className={`absolute top-[76px] text-[24px] leading-[32px] ${Number(n) > 24 ? 'text-[#9a9a9a]' : 'text-[#dcdcdc]'}`} style={{ left: x - 454 }}>{n}</span>
              )}
            </React.Fragment>
          ))}
          <div className="absolute left-[2762px] top-[75px] h-[87px] w-[618px] bg-black/35" />
          {/* end marker covering the first digit of 25 */}
          <div className="absolute left-[2764px] top-[84px] h-[24px] w-[16px] bg-[#5c5c5c] [clip-path:polygon(60%_0,100%_50%,60%_100%,0_50%)]" />

          <div className="absolute left-0 top-[162px] h-[460px] w-[3352px] bg-[#b4b5ab]" />
          <div className="absolute left-0 top-[435px] h-[2px] w-[202px] bg-[#8a8b82]" />
          <ScoreArea />
          <div className="absolute left-[200px] top-[162px] h-[460px] w-[3px] bg-[#8a8b82]" />
          <div className="absolute left-[3352px] top-[162px] h-[490px] w-[28px] bg-[#2c2c2c]" />
          <div className="absolute left-0 top-[622px] h-[30px] w-[3352px] border-t-2 border-[#222222] bg-[#333333]" />

          {/* playhead */}
          <div className="absolute left-[552px] top-[150px] h-[470px] w-[3px] bg-[#b9a95a]" />
          <div className="absolute left-[537px] top-[120px] h-[36px] w-[33px] rounded-t-[6px] bg-[#eed477] [clip-path:polygon(0_0,100%_0,100%_60%,50%_100%,0_60%)]" />

          {/* round logo */}
          <div className="absolute left-[3087px] top-[369px] flex h-[206px] w-[206px] items-center justify-center rounded-full bg-[#fdfdfd] shadow-[inset_0_0_14px_#dedede]">
            <svg width="100" height="68" viewBox="0 0 100 68"><path d="M22 0l27.3 36.3L77 0l22.3 33-26 35H26.7L0 33z" fill="#c40000" /></svg>
          </div>
        </div>
      </div>
    </div>
  );
}

export default function App() {
  return (
    <div className="flex h-[2160px] w-[3840px] flex-col gap-[4px] overflow-hidden bg-[#0c0806] pt-[3px] [font-family:Inter,sans-serif]">
      <PianoRollWindow />
      <ScoreWindow />
    </div>
  );
}
